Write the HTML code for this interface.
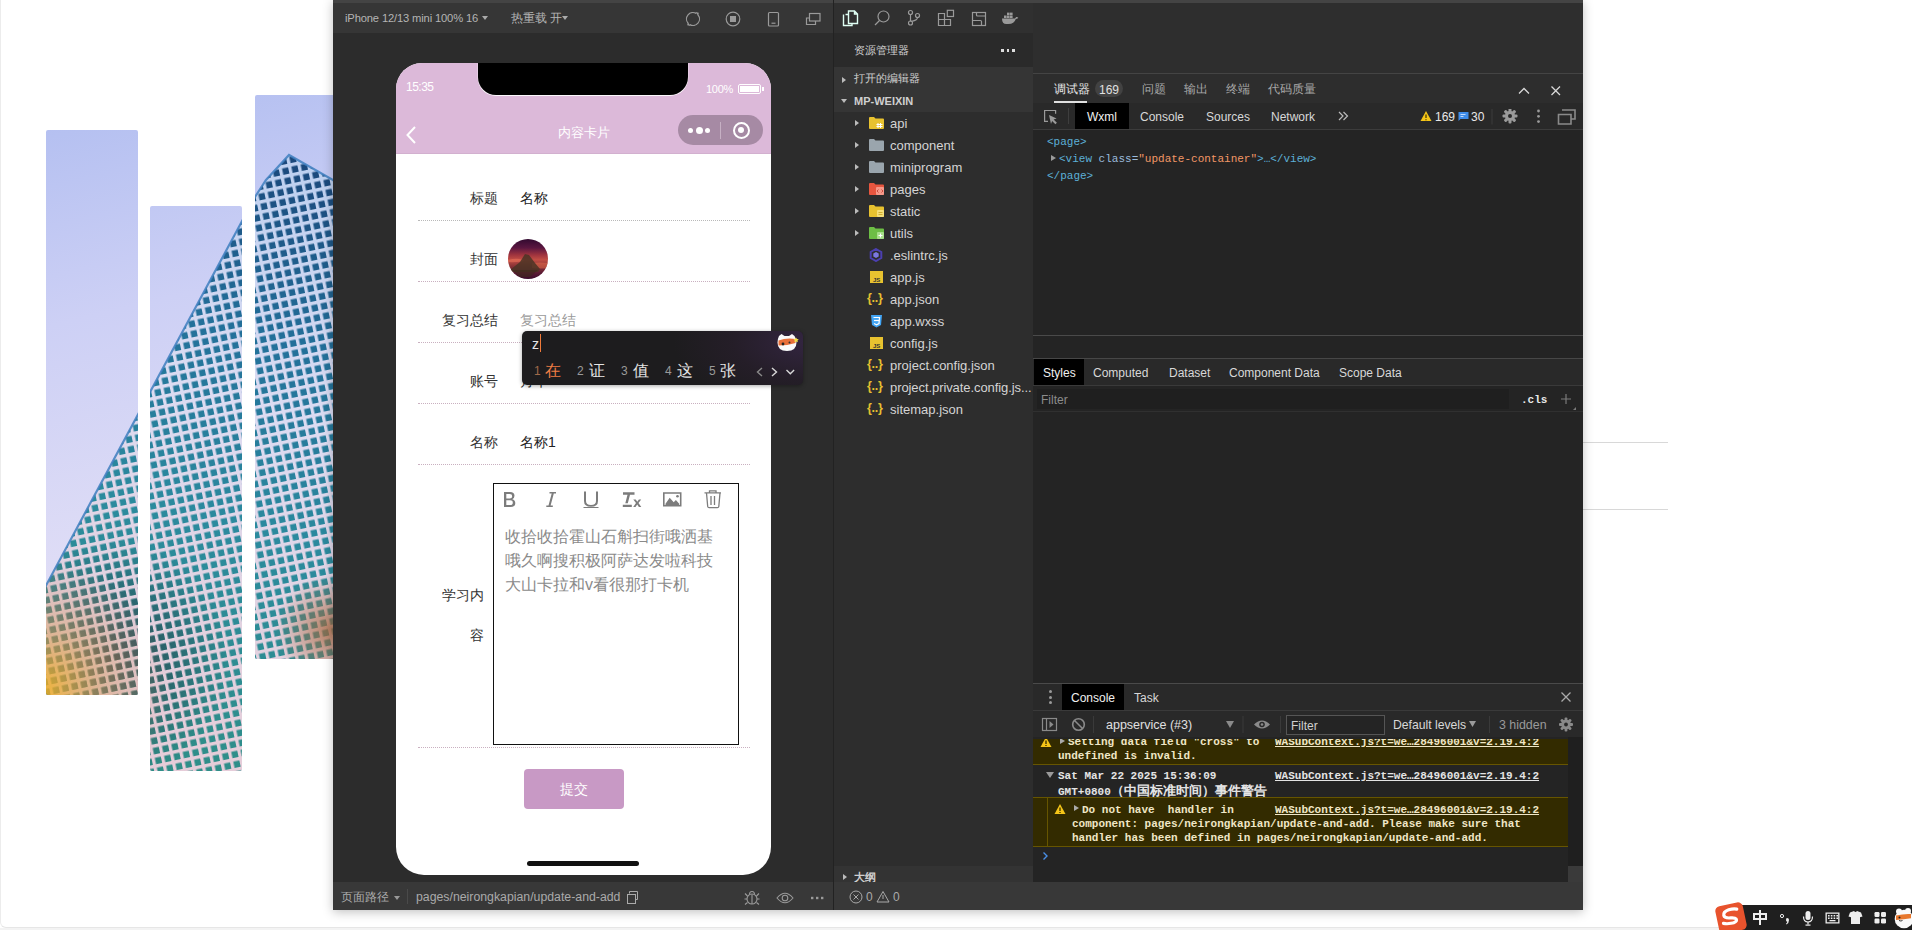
<!DOCTYPE html>
<html><head><meta charset="utf-8">
<style>
*{box-sizing:border-box}
html,body{margin:0;padding:0}
body{width:1912px;height:930px;position:relative;overflow:hidden;background:#fff;font-family:"Liberation Sans",sans-serif;}
.a{position:absolute}
.t{position:absolute;white-space:pre;line-height:1}
.mono{font-family:"Liberation Mono",monospace}
</style></head>
<body>
<!-- page frame -->
<div class="a" style="left:0;top:0;width:1912px;height:928px;border-left:1px solid #ececec;border-bottom:1px solid #e6e6e6;border-bottom-left-radius:6px"></div>
<div class="a" style="left:0;top:928px;width:1912px;height:2px;background:#f3f3f3"></div>

<!-- LEFT IMAGE -->
<svg class="a" style="left:0;top:0" width="340" height="800" viewBox="0 0 340 800">
<defs>
 <clipPath id="strips"><rect x="46" y="130" width="92" height="565" rx="2"/><rect x="150" y="206" width="92" height="565" rx="2"/><rect x="255" y="95" width="92" height="564" rx="2"/></clipPath>
 <linearGradient id="sky" gradientUnits="userSpaceOnUse" x1="0" y1="100" x2="120" y2="600"><stop offset="0" stop-color="#b0bdf0"/><stop offset="0.45" stop-color="#cdd0f5"/><stop offset="1" stop-color="#e2dff6"/></linearGradient>
 <linearGradient id="win" gradientUnits="userSpaceOnUse" x1="320" y1="160" x2="150" y2="760"><stop offset="0" stop-color="#1a467a"/><stop offset="0.3" stop-color="#23709a"/><stop offset="0.6" stop-color="#2b8a9e"/><stop offset="1" stop-color="#2f8e88"/></linearGradient>
 <linearGradient id="frame" gradientUnits="userSpaceOnUse" x1="300" y1="160" x2="120" y2="760"><stop offset="0" stop-color="#bdd0f0"/><stop offset="0.4" stop-color="#dcdcf2"/><stop offset="0.75" stop-color="#e2d2e0"/><stop offset="1" stop-color="#e6ccd8"/></linearGradient>
 <radialGradient id="gold" gradientUnits="userSpaceOnUse" cx="40" cy="690" r="130"><stop offset="0" stop-color="#f0b020" stop-opacity=".9"/><stop offset="0.45" stop-color="#d8a060" stop-opacity=".55"/><stop offset="1" stop-color="#d09080" stop-opacity="0"/></radialGradient>
 <radialGradient id="dark" gradientUnits="userSpaceOnUse" cx="110" cy="660" r="120"><stop offset="0" stop-color="#262630" stop-opacity=".75"/><stop offset="1" stop-color="#262630" stop-opacity="0"/></radialGradient>
 <radialGradient id="orng" gradientUnits="userSpaceOnUse" cx="330" cy="630" r="55"><stop offset="0" stop-color="#a86438" stop-opacity=".75"/><stop offset="1" stop-color="#a86438" stop-opacity="0"/></radialGradient>
 <pattern id="grid" patternUnits="userSpaceOnUse" width="9.5" height="10" patternTransform="rotate(-12)">
  <path d="M0 0 h9.5 v3.5 h-9.5 z M0 0 h3.3 v10 h-3.3 z" fill="#000"/>
 </pattern>
 <mask id="gm"><rect width="340" height="800" fill="#fff"/><rect width="340" height="800" fill="url(#grid)"/></mask>
</defs>
<g clip-path="url(#strips)">
 <rect width="340" height="800" fill="url(#sky)"/>
 <polygon points="289,155 347,188 347,800 0,800 0,671 255,197 266,180" fill="url(#frame)"/>
 <polygon points="289,155 347,188 347,800 0,800 0,671 255,197 266,180" fill="url(#win)" mask="url(#gm)"/>
 <polygon points="289,155 347,188 347,800 0,800 0,671 255,197 266,180" fill="url(#dark)" mask="url(#gm)"/>
 <polygon points="289,155 347,188 347,800 0,800 0,671 255,197 266,180" fill="url(#gold)"/>
 <polygon points="289,155 347,188 347,800 0,800 0,671 255,197 266,180" fill="url(#orng)"/>
 <polyline points="347,188 289,155 266,180 255,197 0,671" fill="none" stroke="#3f7fbf" stroke-width="2.2" opacity=".85"/>
</g>
</svg>

<!-- right lines -->
<div class="a" style="left:1583px;top:442px;width:85px;height:1px;background:#d8d8d8"></div>
<div class="a" style="left:1583px;top:509px;width:85px;height:1px;background:#d8d8d8"></div>

<!-- IDE -->
<div id="ide" class="a" style="left:333px;top:0;width:1250px;height:910px;background:#2d2d2d;box-shadow:0 2px 10px rgba(0,0,0,.25)">
</div>


<!-- SIM PANEL -->
<div class="a" style="left:333px;top:0;width:500px;height:3px;background:#444"></div>
<div class="a" style="left:333px;top:3px;width:500px;height:30px;background:#363636"></div>
<div class="t" style="left:345px;top:13px;font-size:11.2px;color:#b4b4b4;letter-spacing:-0.15px">iPhone 12/13 mini 100% 16</div>
<div class="a" style="left:482px;top:16px;width:0;height:0;border-left:3px solid transparent;border-right:3px solid transparent;border-top:4px solid #aaa"></div>
<div class="t" style="left:511px;top:13px;font-size:11.5px;color:#b4b4b4">热重载 开</div>
<div class="a" style="left:562px;top:16px;width:0;height:0;border-left:3px solid transparent;border-right:3px solid transparent;border-top:4px solid #aaa"></div>
<svg class="a" style="left:683px;top:9px" width="150" height="20" viewBox="683 9 150 20" fill="none" stroke="#9a9a9a" stroke-width="1.2">
 <path d="M696.25 13.37 A6.5 6.5 0 0 0 688.02 23.18"/>
 <path d="M689.75 24.63 A6.5 6.5 0 0 0 697.98 14.82"/>
 <path d="M695.5 12 l3.3 0.8 l-0.6 3.2 z M690.5 26 l-3.3 -0.8 l0.6 -3.2 z" fill="#9a9a9a" stroke="none"/>
 <circle cx="733" cy="19" r="6.8"/>
 <rect x="730" y="16" width="6" height="6" fill="#9a9a9a" stroke="none"/>
 <rect x="768.5" y="12.5" width="10" height="13.5" rx="1"/>
 <path d="M771.5 23.2 h4"/>
 <rect x="809.5" y="13.5" width="10.5" height="7.5"/>
 <path d="M809.5 18 h-3 v6.5 h9 v-3.5"/>
</svg>
<div class="a" style="left:333px;top:33px;width:500px;height:849px;background:#2c2c2c"></div>
<div class="a" style="left:333px;top:882px;width:500px;height:28px;background:#383838"></div>
<div class="a" style="left:833px;top:0;width:1px;height:910px;background:#222"></div>

<!-- PHONE -->
<div class="a" style="left:396px;top:63px;width:375px;height:812px;background:#fff;border-radius:26px 26px 28px 28px;overflow:hidden">
  <div class="a" style="left:0;top:0;width:375px;height:91px;background:#dcb9d9"></div><div class="a" style="left:0;top:90px;width:375px;height:1px;background:#d2b0cf"></div>
  <div class="a" style="left:82px;top:0;width:210px;height:32px;background:#000;border-radius:0 0 18px 18px;box-shadow:0 0.7px 0 0.3px rgba(255,255,255,.9)"></div>
  <div class="t" style="left:10px;top:18px;font-size:12px;color:#fff;letter-spacing:-0.5px">15:35</div>
  <div class="t" style="left:310px;top:21px;font-size:11px;color:#fff;letter-spacing:-0.3px">100%</div>
  <div class="a" style="left:342px;top:21px;width:23px;height:10px;border:1px solid #fff;border-radius:2px"></div>
  <div class="a" style="left:344px;top:23px;width:19px;height:6px;background:#fff"></div>
  <div class="a" style="left:366px;top:24px;width:1.5px;height:4px;background:#fff"></div>
  <svg class="a" style="left:8px;top:60.5px" width="14" height="22" viewBox="0 0 14 22"><path d="M11 3 L3.5 11 L11 19" fill="none" stroke="#fff" stroke-width="2"/></svg>
  <div class="t" style="left:0;top:63px;width:375px;text-align:center;font-size:13px;color:#fff">内容卡片</div>
  <div class="a" style="left:282px;top:52px;width:85px;height:30px;border-radius:15px;background:#a68aa4"></div>
  <div class="a" style="left:324px;top:59px;width:1px;height:17px;background:#c6b0c4"></div>
  <div class="a" style="left:291.5px;top:64.5px;width:5px;height:5px;border-radius:50%;background:#fff"></div>
  <div class="a" style="left:299.5px;top:63.5px;width:7px;height:7px;border-radius:50%;background:#fff"></div>
  <div class="a" style="left:308.5px;top:64.5px;width:5px;height:5px;border-radius:50%;background:#fff"></div>
  <div class="a" style="left:336.5px;top:58.5px;width:17px;height:17px;border-radius:50%;border:2px solid #fff"></div>
  <div class="a" style="left:342px;top:64px;width:6px;height:6px;border-radius:50%;background:#fff"></div>

  <!-- form -->
  <div class="t" style="left:74px;top:128px;font-size:14px;color:#333">标题</div>
  <div class="t" style="left:124px;top:128px;font-size:14px;color:#222">名称</div>
  <div class="a" style="left:22px;top:157px;width:332px;height:0;border-top:1px dotted #b9b9b9"></div>
  <div class="t" style="left:74px;top:189px;font-size:14px;color:#333">封面</div>
  <div id="avatar" class="a" style="left:112px;top:176px;width:40px;height:40px;border-radius:50%;overflow:hidden;background:linear-gradient(180deg,#320a30 0%,#5a1640 22%,#a0343e 40%,#c24e44 52%,#8a3236 68%,#5a1a34 85%,#3a0c2c 100%)"><svg width="40" height="40" viewBox="0 0 40 40" style="position:absolute;left:0;top:0">
<path d="M0 21 q8 -2 14 -0.5 q4 1 0 2 q-8 1 -14 0.5 z" fill="#e8705a" opacity=".6"/>
<path d="M24 24 q8 -1 16 0 v5 q-8 1 -16 0 z" fill="#e06a4a" opacity=".55"/>
<path d="M2 31 L12 23 L17 15 L21 16 L27 24 L32 30 L30 33 L4 33 z" fill="#4a3424" opacity=".85"/>
<path d="M4 31 L30 31 L22 38 L12 38 z" fill="#3e2a1c" opacity=".6"/>
</svg></div>
  <div class="a" style="left:22px;top:218px;width:332px;height:0;border-top:1px dotted #c9b0c0"></div>
  <div class="t" style="left:46px;top:250px;font-size:14px;color:#333">复习总结</div>
  <div class="t" style="left:124px;top:250px;font-size:14px;color:#9a9a9a">复习总结</div>
  <div class="a" style="left:22px;top:279px;width:332px;height:0;border-top:1px dotted #c9b0c0"></div>
  <div class="t" style="left:74px;top:311px;font-size:14px;color:#333">账号</div><div class="t" style="left:124px;top:311px;font-size:14px;color:#222">月华</div>
  <div class="a" style="left:22px;top:340px;width:332px;height:0;border-top:1px dotted #c9b0c0"></div>
  <div class="t" style="left:74px;top:372px;font-size:14px;color:#333">名称</div>
  <div class="t" style="left:124px;top:372px;font-size:14px;color:#222">名称1</div>
  <div class="a" style="left:22px;top:401px;width:332px;height:0;border-top:1px dotted #c9b0c0"></div>

  <div class="t" style="left:46px;top:525px;font-size:14px;color:#333">学习内</div>
  <div class="t" style="left:74px;top:565px;font-size:14px;color:#333">容</div>
  <div class="a" style="left:97px;top:420px;width:246px;height:262px;border:1px solid #111"></div>
  <svg class="a" style="left:-396px;top:-63px" width="800" height="600" viewBox="0 0 800 600">
 <g fill="#7c7c7c">
  <path d="M504 492 h6 q4.5 0 4.5 3.8 q0 2.4 -2.2 3.4 q3 0.8 3 4 q0 3.8 -4.8 3.8 h-6.5 z M506.3 494 v4.4 h3.5 q2.4 0 2.4 -2.2 q0 -2.2 -2.4 -2.2 z M506.3 500.3 v4.7 h3.9 q2.6 0 2.6 -2.35 q0 -2.35 -2.6 -2.35 z"/>
  <path d="M549.5 492 h6.5 v1.4 h-2.2 l-3.2 12.2 h2.2 v1.4 h-6.5 v-1.4 h2.2 l3.2 -12.2 h-2.2 z"/>
  <path d="M584 491.5 h2 v9.5 q0 4 5 4 q5 0 5 -4 v-9.5 h2 v9.5 q0 5.8 -7 5.8 q-7 0 -7 -5.8 z M583.5 507 h15 v1 h-15 z"/>
  <path d="M623 492.3 h11.5 v2.4 h-4.5 l-2.2 8.5 h-2.5 l2.2 -8.5 h-4.5 z M622.8 504.8 h9 v2.2 h-9 z"/>
  <path d="M633.3 499.5 l2.4 0 l1.6 2.3 l1.6 -2.3 h2.3 l-2.7 3.6 l2.8 3.9 h-2.4 l-1.7 -2.5 l-1.7 2.5 h-2.3 l2.8 -3.9 z"/>
  <path d="M663 492.3 h18.5 v14.3 h-18.5 z M664.6 493.8 v11.3 h15.3 v-11.3 z"/>
  <path d="M665.5 503.8 l4.2 -6 l4 4.5 l2.2 -2.2 l3.3 3.7 v1.2 h-13.7 z"/><circle cx="677.5" cy="496.3" r="1.3"/>
 </g>
 <g fill="none" stroke="#7c7c7c" stroke-width="1.3">
  <path d="M704.5 492.8 h16.5 M709.5 492.8 v-2 h6.5 v2 M706.5 493 l1.2 13.5 q0.2 1.2 1.4 1.2 h8.3 q1.2 0 1.4 -1.2 l1.2 -13.5 M711 496 v9 M714.5 496 v9"/>
 </g>
</svg>
  <div class="a" style="left:109px;top:462px;width:222px;font-size:16px;line-height:24px;color:#8a8a8a">收拾收拾霍山石斛扫街哦洒基哦久啊搜积极阿萨达发啦科技大山卡拉和v看很那打卡机</div>
  <div class="a" style="left:22px;top:684px;width:332px;height:0;border-top:1px dotted #c9b0c0"></div>
  <div class="a" style="left:128px;top:706px;width:100px;height:40px;border-radius:4px;background:#c899c5"></div>
  <div class="t" style="left:128px;top:719px;width:100px;text-align:center;font-size:14px;color:#fff">提交</div>
  <div class="a" style="left:131px;top:798px;width:112px;height:5px;border-radius:3px;background:#111"></div>
</div>

<!-- sim status bar -->
<div class="t" style="left:341px;top:891px;font-size:12px;color:#aaa">页面路径</div>
<div class="a" style="left:394px;top:896px;width:0;height:0;border-left:3px solid transparent;border-right:3px solid transparent;border-top:4px solid #999"></div>
<div class="a" style="left:407px;top:889px;width:1px;height:15px;background:#4a4a4a"></div>
<div class="t" style="left:416px;top:891px;font-size:12.3px;color:#aaa">pages/neirongkapian/update-and-add</div>
<svg class="a" style="left:626px;top:889px" width="14" height="16" viewBox="0 0 14 16" fill="none" stroke="#aaa" stroke-width="1"><path d="M3.5 4.5 v-2 h8 v8 h-2"/><rect x="1.5" y="5.5" width="8" height="9"/></svg>
<svg class="a" style="left:740px;top:886px" width="90" height="22" viewBox="740 886 90 22" fill="none" stroke="#9a9a9a" stroke-width="1.1">
 <circle cx="752" cy="899" r="5"/><path d="M749.5 894.5 q0 -3 2.5 -3 q2.5 0 2.5 3 M752 894.5 v9.5 M745 893.5 l2.5 2.5 M759 893.5 l-2.5 2.5 M744.5 899 h2.5 M757 899 h2.5 M745 904.5 l2.5 -2 M759 904.5 l-2.5 -2"/>
 <path d="M777 898 q8 -9.5 16 0 q-8 9.5 -16 0 z"/><circle cx="785" cy="898" r="2.8"/>
 <rect x="811" y="896.8" width="2.4" height="2.4" fill="#9a9a9a" stroke="none"/><rect x="816" y="896.8" width="2.4" height="2.4" fill="#9a9a9a" stroke="none"/><rect x="821" y="896.8" width="2.4" height="2.4" fill="#9a9a9a" stroke="none"/>
</svg>


<!-- EXPLORER -->
<div class="a" style="left:834px;top:0;width:199px;height:3px;background:#444"></div>
<div class="a" style="left:834px;top:3px;width:199px;height:30px;background:#303030"></div>
<svg class="a" style="left:834px;top:0" width="199" height="33" viewBox="834 0 199 33" fill="none" stroke="#9a9a9a" stroke-width="1.2">
 <path d="M848.5 11 h6 l3 3 v9.5 h-9 z M854.5 11 v3 h3" stroke="#dffff4" stroke-width="1.4"/>
 <path d="M845.5 14.5 h3 M843.5 14.5 v11 h8.5 v-2" stroke="#dffff4" stroke-width="1.4"/>
 <circle cx="883.5" cy="16.5" r="5.5"/><path d="M879.5 20.5 l-4.5 4.5"/>
 <circle cx="910.5" cy="12.5" r="2"/><circle cx="910.5" cy="23" r="2"/><circle cx="917.5" cy="15.5" r="2"/>
 <path d="M910.5 14.5 v6.5 M917.5 17.5 q0 3 -7 4"/>
 <path d="M938.5 13.5 h6 v12 h-6 z M938.5 19.5 h12 v6 h-6"/><rect x="947.3" y="10.3" width="6.2" height="6.2"/>
 <rect x="972.5" y="12.5" width="13" height="13"/><path d="M976.5 12.5 v2.5 q0 1 1 1 h8 M972.5 20.5 h8 q1 0 1 1 v4"/>
 <g fill="#9a9a9a" stroke="none">
  <path d="M1002 18.5 h13 q1.5 -1.8 1.3 -2 l2 1.2 q-1.2 1.3 -2.5 1.3 q-1.5 5 -7.5 5 h-2 q-4.3 0 -4.3 -5.5 z"/>
  <rect x="1004" y="15.5" width="2.6" height="2.5"/><rect x="1007" y="15.5" width="2.6" height="2.5"/><rect x="1010" y="15.5" width="2.6" height="2.5"/><rect x="1007" y="12.6" width="2.6" height="2.5"/><rect x="1010" y="12.6" width="2.6" height="2.5"/>
 </g>
</svg>
<div class="a" style="left:834px;top:33px;width:199px;height:849px;background:#2d2d2d"></div><div class="a" style="left:834px;top:33px;width:199px;height:34px;background:#2a2a2a"></div>
<div class="t" style="left:854px;top:45px;font-size:11px;color:#d0d0d0">资源管理器</div>
<div class="a" style="left:1001px;top:49px;width:2.5px;height:2.5px;background:#ddd"></div>
<div class="a" style="left:1006.5px;top:49px;width:2.5px;height:2.5px;background:#ddd"></div>
<div class="a" style="left:1012px;top:49px;width:2.5px;height:2.5px;background:#ddd"></div>
<div class="a" style="left:834px;top:67px;width:199px;height:45px;background:#353535"></div>
<div class="a" style="left:842px;top:76.5px;width:0;height:0;border-top:3px solid transparent;border-bottom:3px solid transparent;border-left:4.5px solid #bbb"></div>
<div class="t" style="left:854px;top:73px;font-size:11px;color:#cfcfcf">打开的编辑器</div>
<div class="a" style="left:841px;top:99px;width:0;height:0;border-left:3px solid transparent;border-right:3px solid transparent;border-top:4.5px solid #bbb"></div>
<div class="t" style="left:854px;top:96px;font-size:11px;font-weight:bold;color:#cfcfcf">MP-WEIXIN</div>

<div class="a" style="left:855px;top:120px;width:0;height:0;border-top:3px solid transparent;border-bottom:3px solid transparent;border-left:4.5px solid #bbb"></div>
<svg class="a" style="left:869px;top:117px" width="15" height="12" viewBox="0 0 15 12"><path d="M0 1 q0 -1 1 -1 h4 l1.5 1.5 h7.5 q1 0 1 1 v8.5 q0 1 -1 1 h-13 q-1 0 -1 -1 z" fill="#e8c22f"/><path d="M9 6 v5 M11.5 6 v5 M7.5 7.5 h6 M7.5 9.5 h6" stroke="#fff" stroke-width="1"/></svg>
<div class="t" style="left:890px;top:117px;font-size:13px;color:#d4d4d4">api</div>
<div class="a" style="left:855px;top:142px;width:0;height:0;border-top:3px solid transparent;border-bottom:3px solid transparent;border-left:4.5px solid #bbb"></div>
<svg class="a" style="left:869px;top:139px" width="15" height="12" viewBox="0 0 15 12"><path d="M0 1 q0 -1 1 -1 h4 l1.5 1.5 h7.5 q1 0 1 1 v8.5 q0 1 -1 1 h-13 q-1 0 -1 -1 z" fill="#9aa5ad"/></svg>
<div class="t" style="left:890px;top:139px;font-size:13px;color:#d4d4d4">component</div>
<div class="a" style="left:855px;top:164px;width:0;height:0;border-top:3px solid transparent;border-bottom:3px solid transparent;border-left:4.5px solid #bbb"></div>
<svg class="a" style="left:869px;top:161px" width="15" height="12" viewBox="0 0 15 12"><path d="M0 1 q0 -1 1 -1 h4 l1.5 1.5 h7.5 q1 0 1 1 v8.5 q0 1 -1 1 h-13 q-1 0 -1 -1 z" fill="#9aa5ad"/></svg>
<div class="t" style="left:890px;top:161px;font-size:13px;color:#d4d4d4">miniprogram</div>
<div class="a" style="left:855px;top:186px;width:0;height:0;border-top:3px solid transparent;border-bottom:3px solid transparent;border-left:4.5px solid #bbb"></div>
<svg class="a" style="left:869px;top:183px" width="15" height="12" viewBox="0 0 15 12"><path d="M0 1 q0 -1 1 -1 h4 l1.5 1.5 h7.5 q1 0 1 1 v8.5 q0 1 -1 1 h-13 q-1 0 -1 -1 z" fill="#e8563f"/><rect x="7" y="4" width="8" height="8" rx="1" fill="#f79a8a"/><path d="M9.5 6.5 l-1.5 1.5 l1.5 1.5 M12.5 6.5 l1.5 1.5 l-1.5 1.5" stroke="#c0392b" stroke-width="0.8" fill="none"/></svg>
<div class="t" style="left:890px;top:183px;font-size:13px;color:#d4d4d4">pages</div>
<div class="a" style="left:855px;top:208px;width:0;height:0;border-top:3px solid transparent;border-bottom:3px solid transparent;border-left:4.5px solid #bbb"></div>
<svg class="a" style="left:869px;top:205px" width="15" height="12" viewBox="0 0 15 12"><path d="M0 1 q0 -1 1 -1 h4 l1.5 1.5 h7.5 q1 0 1 1 v8.5 q0 1 -1 1 h-13 q-1 0 -1 -1 z" fill="#e8c22f"/><rect x="8" y="5" width="7" height="7" rx="1" fill="#f6df7a"/><path d="M9.5 7.5 h4 M9.5 9.5 h4" stroke="#c9a21a" stroke-width="0.8"/></svg>
<div class="t" style="left:890px;top:205px;font-size:13px;color:#d4d4d4">static</div>
<div class="a" style="left:855px;top:230px;width:0;height:0;border-top:3px solid transparent;border-bottom:3px solid transparent;border-left:4.5px solid #bbb"></div>
<svg class="a" style="left:869px;top:227px" width="15" height="12" viewBox="0 0 15 12"><path d="M0 1 q0 -1 1 -1 h4 l1.5 1.5 h7.5 q1 0 1 1 v8.5 q0 1 -1 1 h-13 q-1 0 -1 -1 z" fill="#6dbe45"/><rect x="8" y="5" width="7" height="7" rx="1" fill="#a8e08a"/><path d="M11.5 6.5 v4 M9.5 8.5 h4" stroke="#fff" stroke-width="1"/></svg>
<div class="t" style="left:890px;top:227px;font-size:13px;color:#d4d4d4">utils</div>
<svg class="a" style="left:869px;top:248px" width="14" height="14" viewBox="0 0 14 14"><path d="M7 1 l5.3 3 v6 l-5.3 3 l-5.3 -3 v-6 z" fill="none" stroke="#4b3fb0" stroke-width="2"/><path d="M7 4 l2.7 1.5 v3 l-2.7 1.5 l-2.7 -1.5 v-3 z" fill="#7b78e0"/></svg>
<div class="t" style="left:890px;top:249px;font-size:13px;color:#d4d4d4">.eslintrc.js</div>
<svg class="a" style="left:870px;top:271px" width="13" height="12" viewBox="0 0 13 12"><rect width="13" height="12" fill="#e8c22f"/><text x="3" y="10.5" font-size="6" font-family="Liberation Sans" font-weight="bold" fill="#333">JS</text></svg>
<div class="t" style="left:890px;top:271px;font-size:13px;color:#d4d4d4">app.js</div>
<div class="t" style="left:867px;top:292px;font-size:12.5px;font-weight:bold;color:#e6c030;letter-spacing:-0.3px">{..}</div>
<div class="t" style="left:890px;top:293px;font-size:13px;color:#d4d4d4">app.json</div>
<svg class="a" style="left:870px;top:314px" width="13" height="14" viewBox="0 0 13 14"><path d="M1 1 h11 l-1 10 l-4.5 2.5 l-4.5 -2.5 z" fill="#42a5f5"/><path d="M3.5 3.5 h6 l-0.5 6 l-2.5 1.3 l-2.5 -1.3" stroke="#fff" stroke-width="1.2" fill="none"/><path d="M4 6.5 h5" stroke="#fff" stroke-width="1.2"/></svg>
<div class="t" style="left:890px;top:315px;font-size:13px;color:#d4d4d4">app.wxss</div>
<svg class="a" style="left:870px;top:337px" width="13" height="12" viewBox="0 0 13 12"><rect width="13" height="12" fill="#e8c22f"/><text x="3" y="10.5" font-size="6" font-family="Liberation Sans" font-weight="bold" fill="#333">JS</text></svg>
<div class="t" style="left:890px;top:337px;font-size:13px;color:#d4d4d4">config.js</div>
<div class="t" style="left:867px;top:358px;font-size:12.5px;font-weight:bold;color:#e6c030;letter-spacing:-0.3px">{..}</div>
<div class="t" style="left:890px;top:359px;font-size:13px;color:#d4d4d4">project.config.json</div>
<div class="t" style="left:867px;top:380px;font-size:12.5px;font-weight:bold;color:#e6c030;letter-spacing:-0.3px">{..}</div>
<div class="t" style="left:890px;top:381px;font-size:13px;color:#d4d4d4;letter-spacing:-0.08px">project.private.config.js...</div>
<div class="t" style="left:867px;top:402px;font-size:12.5px;font-weight:bold;color:#e6c030;letter-spacing:-0.3px">{..}</div>
<div class="t" style="left:890px;top:403px;font-size:13px;color:#d4d4d4">sitemap.json</div>

<div class="a" style="left:834px;top:866px;width:199px;height:16px;background:#333"></div>
<div class="a" style="left:843px;top:873.5px;width:0;height:0;border-top:3px solid transparent;border-bottom:3px solid transparent;border-left:4.5px solid #bbb"></div>
<div class="t" style="left:854px;top:871.5px;font-size:11px;font-weight:bold;color:#cfcfcf">大纲</div>
<div class="a" style="left:834px;top:882px;width:199px;height:28px;background:#383838"></div>
<svg class="a" style="left:848px;top:889px" width="60" height="16" viewBox="848 889 60 16" fill="none" stroke="#aaa" stroke-width="1">
 <circle cx="856" cy="897" r="6"/><path d="M853.5 894.5 l5 5 M858.5 894.5 l-5 5"/>
 <path d="M883 891.5 l6 10.5 h-12 z"/><path d="M883 895 v4" />
</svg>
<div class="t" style="left:866px;top:891px;font-size:12px;color:#aaa">0</div>
<div class="t" style="left:893px;top:891px;font-size:12px;color:#aaa">0</div>



<!-- DEVTOOLS -->
<div class="a" style="left:1033px;top:0;width:550px;height:3px;background:#444"></div>
<div class="a" style="left:1033px;top:3px;width:550px;height:70px;background:#2e2e2e"></div>
<div class="a" style="left:1033px;top:73px;width:550px;height:1px;background:#444"></div>
<div class="a" style="left:1033px;top:74px;width:550px;height:29px;background:#2d2d2d"></div>
<div class="t" style="left:1054px;top:83.5px;font-size:11.5px;color:#e8e8e8">调试器</div>
<div class="a" style="left:1054px;top:101px;width:33px;height:2px;background:#e0e0e0"></div>
<div class="a" style="left:1095px;top:80px;width:28px;height:17px;border-radius:9px;background:#424242"></div>
<div class="t" style="left:1095px;top:84px;width:28px;text-align:center;font-size:12px;color:#e0e0e0">169</div>
<div class="t" style="left:1142px;top:83.5px;font-size:11.5px;color:#a8a8a8">问题</div>
<div class="t" style="left:1184px;top:83.5px;font-size:11.5px;color:#a8a8a8">输出</div>
<div class="t" style="left:1226px;top:83.5px;font-size:11.5px;color:#a8a8a8">终端</div>
<div class="t" style="left:1268px;top:83.5px;font-size:11.5px;color:#a8a8a8">代码质量</div>
<svg class="a" style="left:1510px;top:80px" width="60" height="20" viewBox="1510 80 60 20" fill="none" stroke="#d8d8d8" stroke-width="1.3">
 <path d="M1519 93.5 l5 -5 l5 5"/>
 <path d="M1551.5 86.5 l8.5 8.5 M1560 86.5 l-8.5 8.5"/>
</svg>

<div class="a" style="left:1033px;top:103px;width:550px;height:26px;background:#292929"></div>
<div class="a" style="left:1033px;top:129px;width:550px;height:1px;background:#3c3c3c"></div>
<svg class="a" style="left:1040px;top:106px" width="22" height="20" viewBox="1040 106 22 20" fill="none" stroke="#9a9a9a" stroke-width="1.2">
 <path d="M1048 121.3 h-3.4 v-10.8 h11 v3.2"/>
 <path d="M1049 115 l7.6 3.4 l-3 1.1 l3.3 3.3 l-1.5 1.5 l-3.3 -3.3 l-1.1 3 z" fill="#9a9a9a" stroke="none"/>
</svg>
<div class="a" style="left:1068px;top:108px;width:1px;height:16px;background:#3e3e3e"></div>
<div class="a" style="left:1075px;top:103px;width:54px;height:26px;background:#000"></div>
<div class="t" style="left:1087px;top:111px;font-size:12px;color:#f0f0f0">Wxml</div>
<div class="t" style="left:1140px;top:111px;font-size:12px;color:#d8d8d8">Console</div>
<div class="t" style="left:1206px;top:111px;font-size:12px;color:#d8d8d8">Sources</div>
<div class="t" style="left:1271px;top:111px;font-size:12px;color:#d8d8d8">Network</div>
<svg class="a" style="left:1336px;top:110px" width="14" height="12" viewBox="0 0 14 12" fill="none" stroke="#bbb" stroke-width="1.2"><path d="M3 2 l4 4 l-4 4 M7.5 2 l4 4 l-4 4"/></svg>
<svg class="a" style="left:1420px;top:109px" width="160" height="18" viewBox="1420 109 160 18">
 <path d="M1426 111 l5.5 10 h-11 z" fill="#f5c518"/><path d="M1426 114.5 v3.5 M1426 119.2 v1" stroke="#3a3000" stroke-width="1.2"/>
 <path d="M1458.5 112 h10 v7 h-8 l-2 2 z" fill="#3f8ce8"/><path d="M1460.5 114.5 h5 M1460.5 116.5 h3" stroke="#cfe3ff" stroke-width="0.9"/>
 <rect x="1491.5" y="108.5" width="1" height="16" fill="#3c3c3c"/>
 <g fill="#9a9a9a"><circle cx="1510" cy="116" r="5"/><rect x="1508.5" y="108.5" width="3" height="15" rx="1"/><rect x="1502.5" y="114.5" width="15" height="3" rx="1"/><rect x="1508.5" y="108.5" width="3" height="15" rx="1" transform="rotate(45 1510 116)"/><rect x="1508.5" y="108.5" width="3" height="15" rx="1" transform="rotate(-45 1510 116)"/></g>
 <circle cx="1510" cy="116" r="2" fill="#292929"/>
 <g fill="#9a9a9a"><circle cx="1538.5" cy="111" r="1.4"/><circle cx="1538.5" cy="116.3" r="1.4"/><circle cx="1538.5" cy="121.6" r="1.4"/></g>
 <path d="M1562 110 h13 v9 h-4 M1558.5 114.5 h12.5 v9.5 h-12.5 z" fill="none" stroke="#8a8a8a" stroke-width="1.6"/>
</svg>
<div class="t" style="left:1435px;top:111px;font-size:12px;color:#e8e8e8">169</div>
<div class="t" style="left:1471px;top:111px;font-size:12px;color:#e8e8e8">30</div>

<div class="a" style="left:1033px;top:130px;width:550px;height:205px;background:#242424"></div>
<div class="t mono" style="left:1047px;top:136.5px;font-size:11px;color:#5db0d7">&lt;page&gt;</div>
<div class="a" style="left:1051px;top:154.5px;width:0;height:0;border-top:3.5px solid transparent;border-bottom:3.5px solid transparent;border-left:5px solid #9a9a9a"></div>
<div class="t mono" style="left:1059px;top:153.5px;font-size:11px;color:#5db0d7">&lt;view <span style="color:#9bbbdc">class</span><span style="color:#9bbbdc">=</span><span style="color:#f29766">"update-container"</span>&gt;…&lt;/view&gt;</div>
<div class="t mono" style="left:1047px;top:170.5px;font-size:11px;color:#5db0d7">&lt;/page&gt;</div>

<div class="a" style="left:1033px;top:335px;width:550px;height:1px;background:#4a4a4a"></div>
<div class="a" style="left:1033px;top:336px;width:550px;height:22px;background:#242424"></div>
<div class="a" style="left:1033px;top:358px;width:550px;height:1px;background:#474747"></div>
<div class="a" style="left:1033px;top:359px;width:550px;height:26px;background:#292929"></div>
<div class="a" style="left:1034px;top:359px;width:50px;height:26px;background:#000"></div>
<div class="t" style="left:1043px;top:367px;font-size:12px;color:#f0f0f0">Styles</div>
<div class="t" style="left:1093px;top:367px;font-size:12px;color:#d8d8d8">Computed</div>
<div class="t" style="left:1169px;top:367px;font-size:12px;color:#d8d8d8">Dataset</div>
<div class="t" style="left:1229px;top:367px;font-size:12px;color:#d8d8d8">Component Data</div>
<div class="t" style="left:1339px;top:367px;font-size:12px;color:#d8d8d8">Scope Data</div>
<div class="a" style="left:1033px;top:385px;width:550px;height:1px;background:#3a3a3a"></div>
<div class="a" style="left:1033px;top:386px;width:550px;height:297px;background:#242424"></div>
<div class="a" style="left:1037px;top:389px;width:472px;height:20px;background:#1f1f1f"></div>
<div class="t" style="left:1041px;top:394px;font-size:12px;color:#8c8c8c">Filter</div>
<div class="t mono" style="left:1521px;top:394.5px;font-size:11px;font-weight:bold;color:#e8e8e8">.cls</div>
<svg class="a" style="left:1558px;top:391px" width="20" height="20" viewBox="0 0 20 20" fill="none" stroke="#7a7a7a" stroke-width="1.2"><path d="M8 3 v10 M3 8 h10"/><path d="M18 16 l-3 3 h3 z" fill="#7a7a7a" stroke="none"/></svg>
<div class="a" style="left:1033px;top:411px;width:550px;height:1px;background:#303030"></div>

<!-- console drawer -->
<div class="a" style="left:1033px;top:683px;width:550px;height:1px;background:#4a4a4a"></div>
<div class="a" style="left:1033px;top:684px;width:550px;height:26px;background:#292929"></div>
<g></g>
<div class="a" style="left:1048.5px;top:690px;width:3px;height:3px;border-radius:50%;background:#9a9a9a"></div>
<div class="a" style="left:1048.5px;top:695.5px;width:3px;height:3px;border-radius:50%;background:#9a9a9a"></div>
<div class="a" style="left:1048.5px;top:701px;width:3px;height:3px;border-radius:50%;background:#9a9a9a"></div>
<div class="a" style="left:1062px;top:684px;width:62px;height:26px;background:#000"></div>
<div class="t" style="left:1071px;top:692px;font-size:12px;color:#f0f0f0">Console</div>
<div class="t" style="left:1134px;top:692px;font-size:12px;color:#d8d8d8">Task</div>
<svg class="a" style="left:1558px;top:689px" width="16" height="16" viewBox="0 0 16 16" fill="none" stroke="#aaa" stroke-width="1.3"><path d="M3.5 3.5 l9 9 M12.5 3.5 l-9 9"/></svg>
<div class="a" style="left:1033px;top:710px;width:550px;height:1px;background:#3a3a3a"></div>
<div class="a" style="left:1033px;top:711px;width:550px;height:28px;background:#292929"></div>
<svg class="a" style="left:1040px;top:712px" width="250" height="24" viewBox="1040 712 250 24" fill="none" stroke="#8a8a8a" stroke-width="1.2">
 <rect x="1042.5" y="718.5" width="14" height="12"/><path d="M1046.5 718.5 v12"/><path d="M1049.5 721 l4 3.5 l-4 3.5 z" fill="#8a8a8a" stroke="none"/>
 <circle cx="1078.5" cy="724.5" r="5.8" stroke-width="1.6"/><path d="M1074.5 720.5 l8 8" stroke-width="1.6"/>
 <rect x="1093" y="716" width="1" height="17" fill="#3a3a3a" stroke="none"/>
 <path d="M1226 721 h8 l-4 7 z" fill="#8a8a8a" stroke="none"/>
 <rect x="1242.5" y="716" width="1" height="17" fill="#3a3a3a" stroke="none"/>
 <path d="M1254 724.5 q8 -8 16 0 q-8 8 -16 0 z" fill="#8a8a8a" stroke="none"/><circle cx="1262" cy="724.5" r="2.8" fill="#292929" stroke="none"/><circle cx="1262" cy="724.5" r="1.3" fill="#8a8a8a" stroke="none"/>
 <rect x="1280" y="716" width="1" height="17" fill="#3a3a3a" stroke="none"/>
</svg>
<div class="t" style="left:1106px;top:719px;font-size:12.5px;color:#e0e0e0">appservice (#3)</div>
<div class="a" style="left:1286px;top:715px;width:99px;height:20px;border:1px solid #555;background:#242424"></div>
<div class="t" style="left:1291px;top:720px;font-size:12px;color:#d0d0d0">Filter</div>
<div class="t" style="left:1393px;top:719px;font-size:12.2px;color:#d8d8d8">Default levels</div>
<svg class="a" style="left:1468px;top:719px" width="10" height="10" viewBox="0 0 10 10"><path d="M1 2 h7 l-3.5 6 z" fill="#9a9a9a"/></svg>
<div class="a" style="left:1489px;top:716px;width:1px;height:17px;background:#3a3a3a"></div>
<div class="t" style="left:1499px;top:719px;font-size:12.4px;color:#9a9a9a">3 hidden</div>
<svg class="a" style="left:1557px;top:716px" width="18" height="18" viewBox="1557 716 18 18">
 <g fill="#8a8a8a"><circle cx="1566" cy="724.5" r="4.8"/><rect x="1564.6" y="717.5" width="2.8" height="14" rx="1"/><rect x="1559" y="723.1" width="14" height="2.8" rx="1"/><rect x="1564.6" y="717.5" width="2.8" height="14" rx="1" transform="rotate(45 1566 724.5)"/><rect x="1564.6" y="717.5" width="2.8" height="14" rx="1" transform="rotate(-45 1566 724.5)"/></g>
 <circle cx="1566" cy="724.5" r="1.9" fill="#292929"/>
</svg>
<div class="a" style="left:1033px;top:737px;width:535px;height:145px;background:#242424"></div>
<div class="a" style="left:1568px;top:737px;width:15px;height:145px;background:#1f1f1f"></div>
<div class="a" style="left:1568px;top:866px;width:15px;height:16px;background:#3a3a3a"></div>
<div class="a" style="left:0;top:739px;width:1568px;height:143px;overflow:hidden"><div class="a" style="left:0;top:-739px;width:1912px;height:930px">
<div class="a" style="left:1033px;top:737px;width:535px;height:145px;background:#242424"></div>
<!-- warn 1 -->
<div class="a" style="left:1033px;top:737px;width:535px;height:27px;background:#332b00"></div>
<div class="a" style="left:1033px;top:764px;width:535px;height:1px;background:#665500"></div>
<svg class="a" style="left:1040px;top:736px" width="12" height="12" viewBox="0 0 12 12"><path d="M6 1 l5.5 10 h-11 z" fill="#f5c518"/><path d="M6 4.5 v3.5 M6 9 v1" stroke="#332b00" stroke-width="1.3"/></svg>
<div class="a" style="left:1060px;top:737.5px;width:0;height:0;border-top:3.5px solid transparent;border-bottom:3.5px solid transparent;border-left:5px solid #aaa"></div>
<div class="t mono" style="left:1068px;top:737px;font-size:11px;font-weight:bold;color:#efe6c6">Setting data field "cross" to</div>
<div class="t mono" style="left:1058px;top:751px;font-size:11px;font-weight:bold;color:#efe6c6">undefined is invalid.</div>
<div class="t mono" style="left:1275px;top:737px;font-size:11px;font-weight:bold;color:#efe6c6;text-decoration:underline">WASubContext.js?t=we…28496001&amp;v=2.19.4:2</div>
<!-- group -->
<div class="a" style="left:1046px;top:772px;width:0;height:0;border-left:4px solid transparent;border-right:4px solid transparent;border-top:6px solid #9a9a9a"></div>
<div class="t mono" style="left:1058px;top:771px;font-size:11px;font-weight:bold;color:#e4e4e4">Sat Mar 22 2025 15:36:09</div>
<div class="t mono" style="left:1058px;top:784px;font-size:11px;font-weight:bold;color:#e4e4e4">GMT+0800<span style="font-size:13.3px;font-family:'Liberation Sans',sans-serif">（中国标准时间）事件警告</span></div>
<div class="t mono" style="left:1275px;top:771px;font-size:11px;font-weight:bold;color:#e4e4e4;text-decoration:underline">WASubContext.js?t=we…28496001&amp;v=2.19.4:2</div>
<!-- warn 2 -->
<div class="a" style="left:1033px;top:797px;width:535px;height:1px;background:#665500"></div>
<div class="a" style="left:1033px;top:798px;width:535px;height:48px;background:#332b00"></div>
<div class="a" style="left:1047px;top:798px;width:1px;height:48px;background:#665500"></div>
<div class="a" style="left:1033px;top:846px;width:535px;height:1px;background:#665500"></div>
<svg class="a" style="left:1054px;top:803px" width="12" height="12" viewBox="0 0 12 12"><path d="M6 1 l5.5 10 h-11 z" fill="#f5c518"/><path d="M6 4.5 v3.5 M6 9 v1" stroke="#332b00" stroke-width="1.3"/></svg>
<div class="a" style="left:1074px;top:805px;width:0;height:0;border-top:3.5px solid transparent;border-bottom:3.5px solid transparent;border-left:5px solid #aaa"></div>
<div class="t mono" style="left:1082px;top:805px;font-size:11px;font-weight:bold;color:#efe6c6">Do not have  handler in</div>
<div class="t mono" style="left:1072px;top:819px;font-size:11px;font-weight:bold;color:#efe6c6">component: pages/neirongkapian/update-and-add. Please make sure that</div>
<div class="t mono" style="left:1072px;top:833px;font-size:11px;font-weight:bold;color:#efe6c6">handler has been defined in pages/neirongkapian/update-and-add.</div>
<div class="t mono" style="left:1275px;top:805px;font-size:11px;font-weight:bold;color:#efe6c6;text-decoration:underline">WASubContext.js?t=we…28496001&amp;v=2.19.4:2</div>
<svg class="a" style="left:1041px;top:850px" width="10" height="12" viewBox="0 0 10 12" fill="none" stroke="#4a8fe6" stroke-width="1.4"><path d="M2.5 2.5 l3.5 3.5 l-3.5 3.5"/></svg>
</div></div>
<div class="a" style="left:1033px;top:882px;width:550px;height:28px;background:#383838"></div>


<!-- IME popup -->
<div class="a" style="left:522px;top:331px;width:281px;height:54px;border-radius:5px;background:#1d1c1e;box-shadow:0 1px 4px rgba(0,0,0,.35);overflow:hidden">
 <div class="a" style="left:150px;top:-60px;width:200px;height:140px;background:radial-gradient(ellipse at 70% 50%,rgba(70,45,95,.55) 0,rgba(60,35,70,.25) 40%,rgba(29,28,30,0) 70%)"></div>
</div>
<div class="t" style="left:532px;top:337px;font-size:14px;color:#e6e6e6">z</div>
<div class="a" style="left:540px;top:334px;width:1px;height:18px;background:#f07a3a"></div>
<div class="t" style="left:534px;top:365px;font-size:12px;color:#a06a4a">1</div>
<div class="t" style="left:545px;top:362.5px;font-size:16px;color:#ee7c45">在</div>
<div class="t" style="left:577px;top:365px;font-size:12px;color:#9a9a9a">2</div>
<div class="t" style="left:589px;top:362.5px;font-size:16px;color:#e4e4e4">证</div>
<div class="t" style="left:621px;top:365px;font-size:12px;color:#9a9a9a">3</div>
<div class="t" style="left:633px;top:362.5px;font-size:16px;color:#e4e4e4">值</div>
<div class="t" style="left:665px;top:365px;font-size:12px;color:#9a9a9a">4</div>
<div class="t" style="left:677px;top:362.5px;font-size:16px;color:#e4e4e4">这</div>
<div class="t" style="left:709px;top:365px;font-size:12px;color:#9a9a9a">5</div>
<div class="t" style="left:720px;top:362.5px;font-size:16px;color:#e4e4e4">张</div>
<svg class="a" style="left:750px;top:330px" width="55" height="56" viewBox="750 330 55 56">
 <path d="M762 368 l-4.5 4 l4.5 4" fill="none" stroke="#8a8a8a" stroke-width="1.4"/>
 <path d="M772 368 l4.5 4 l-4.5 4" fill="none" stroke="#d8d8d8" stroke-width="1.4"/>
 <path d="M786.5 370 l3.8 3.8 l3.8 -3.8" fill="none" stroke="#d8d8d8" stroke-width="1.4"/>
 <path d="M779 336 l2.5 -2 l3 2 h4.5 l3 -2 l2.5 2 q2 3 2 6.5 q0 8.5 -9.5 8.5 q-9.5 0 -9.5 -8.5 q0 -3.5 1.5 -6.5 z" fill="#fafafa"/>
 <path d="M778.5 340.5 q8 -3 17 -1.5 v4 q-8 2.5 -17 2.5 z" fill="#e9703a"/>
 <circle cx="783" cy="344" r="1.4" fill="#222"/><circle cx="789.5" cy="342.5" r="1" fill="#333"/>
 <path d="M796 337.5 l1 1.5 l1.8 0.3 l-1.3 1.2 l0.3 1.8 l-1.8 -0.9 l-1.6 0.9 l0.3 -1.8 l-1.3 -1.2 l1.8 -0.3 z" fill="#f3e24a"/>
</svg>

<!-- IME tray -->
<div class="a" style="left:1737px;top:905px;width:175px;height:25px;background:#1f1f1f"></div>
<svg class="a" style="left:1710px;top:899px" width="202" height="34" viewBox="1710 896 202 34">
 <g transform="rotate(-12 1731 915)"><rect x="1717" y="901" width="28" height="28" rx="5" fill="#e8532d"/>
 <path d="M1738.5 907.5 q-3 -1.5 -8 -1 q-6 0.8 -6 4.5 q0 3 6 3.8 q6 0.8 5.5 3.2 q-0.5 2.2 -6 2.2 q-4 0 -7.5 -1.5" fill="none" stroke="#fff" stroke-width="3.2" stroke-linecap="round"/></g>
 <g fill="#eee">
  <path d="M1753 910 h14 v7 h-14 z M1755 912 v3 h10 v-3 z" fill-rule="evenodd"/><rect x="1759" y="907" width="2" height="15"/>
  <circle cx="1782" cy="913" r="1.6" fill="none" stroke="#eee" stroke-width="1"/>
  <path d="M1787 915 q2 0 2 2 q0 3 -2.5 4.5 l-0.5 -0.8 q1.3 -1 1.3 -2 q-1.3 0 -1.3 -1.8 q0 -1.9 1 -1.9 z"/>
  <rect x="1805.5" y="908" width="5" height="9" rx="2.5"/><path d="M1803.5 913.5 q0 5.5 4.5 5.5 q4.5 0 4.5 -5.5" fill="none" stroke="#eee" stroke-width="1.2"/><rect x="1807.4" y="919" width="1.2" height="2.5"/><rect x="1805.5" y="921.5" width="5" height="1.2"/>
  <path d="M1825.5 909.5 h14 v11 h-14 z M1826.8 910.8 v8.4 h11.4 v-8.4 z" fill-rule="evenodd"/>
  <rect x="1828" y="912" width="1.6" height="1.5"/><rect x="1830.8" y="912" width="1.6" height="1.5"/><rect x="1833.6" y="912" width="1.6" height="1.5"/><rect x="1836.4" y="912" width="1.6" height="1.5"/>
  <rect x="1828" y="914.5" width="1.6" height="1.5"/><rect x="1830.8" y="914.5" width="1.6" height="1.5"/><rect x="1833.6" y="914.5" width="1.6" height="1.5"/><rect x="1836.4" y="914.5" width="1.6" height="1.5"/>
  <rect x="1829.5" y="917" width="6" height="1.3"/>
  <path d="M1850 909.5 l4 -1.5 q1.5 1.8 3 0 l4 1.5 l1.5 4 l-2.5 0.8 v6.7 h-9 v-6.7 l-2.5 -0.8 z"/>
  <rect x="1874.5" y="909" width="5" height="5" rx="1.2"/><rect x="1881" y="909" width="5" height="5" rx="1.2"/><rect x="1874.5" y="915.5" width="5" height="5" rx="1.2"/><rect x="1881" y="915.5" width="5" height="5" rx="1.2"/>
 </g>
 <circle cx="1904" cy="916" r="9.3" fill="#fafafa"/><circle cx="1899" cy="908.5" r="3" fill="#fafafa"/><circle cx="1908" cy="908" r="3" fill="#fafafa"/>
 <path d="M1896 912.5 q8 -2 15 -1.5 v4.3 q-7 1 -15 1.7 z" fill="#e8782e"/>
 <circle cx="1899.5" cy="914.5" r="1" fill="#222"/><path d="M1899 917.5 q2 1 3.5 0" stroke="#222" stroke-width="0.9" fill="none"/>
</svg>

</body></html>
